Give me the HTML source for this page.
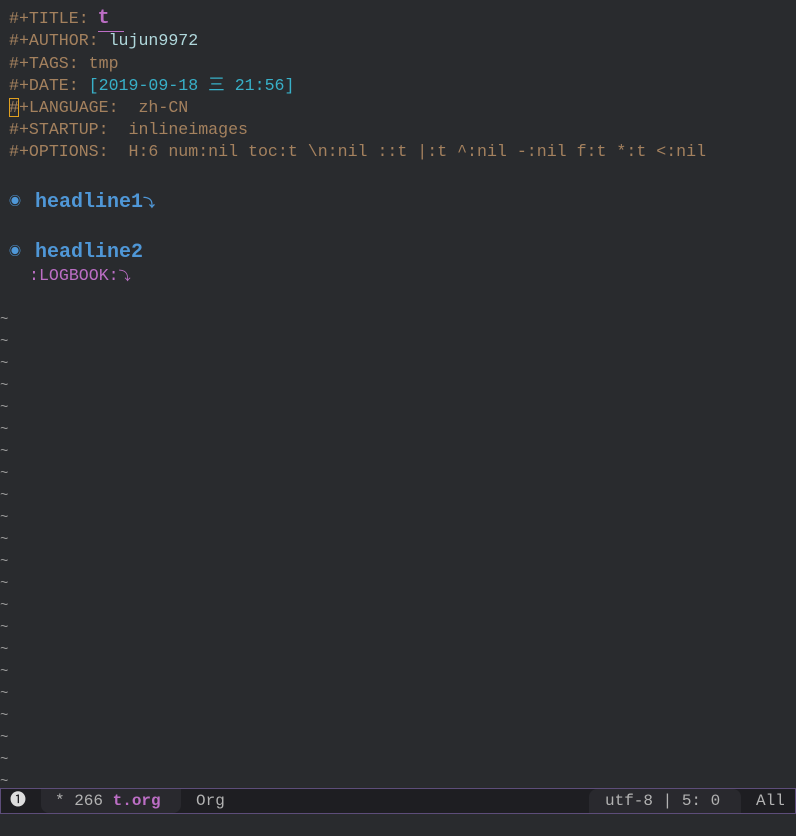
<!DOCTYPE html>
<html><head><meta charset="utf-8"><style>
html,body{margin:0;padding:0;}
body{width:796px;height:836px;background:#292b2e;overflow:hidden;position:relative;font-family:"Liberation Mono","Noto Sans CJK SC",monospace;font-size:16.6px;color:#a08060;}
.l{position:absolute;left:9px;height:22px;line-height:22px;white-space:pre;}
.k{color:#a4815e}
.v{color:#b0d8dc}
.d{color:#38b0c8}
.t{color:#bc6ec5;font-weight:bold;font-size:20px;display:inline-block;line-height:20px;border-bottom:1px solid #bc6ec5;padding:0 14px 2px 0;margin-left:-1px}
.h{position:absolute;left:9px;height:28px;line-height:28px;color:#4f97d7;font-weight:bold;font-size:20px;white-space:pre;}
.b{font-size:12px;display:inline-block;width:26px;vertical-align:2px;}
.ar{font-size:12px;}
.tl{position:absolute;left:0;color:#9a9a9a;font-size:14px;line-height:22px;height:22px;}
#ml{position:absolute;left:0;top:788px;width:794px;height:24px;border:1px solid #5d4d7a;background:#1e1e22;color:#b2b2b2;font-size:16px;line-height:24px;}
.seg{position:absolute;top:0;height:24px;white-space:pre;}
</style></head><body>
<div class="l" style="top:8px"><span class="k">#+TITLE: </span><span class="t">t</span></div>
<div class="l" style="top:30px"><span class="k">#+AUTHOR: </span><span class="v">lujun9972</span></div>
<div class="l" style="top:53px"><span class="k">#+TAGS: tmp</span></div>
<div class="l" style="top:75px"><span class="k">#+DATE: </span><span class="d">[2019-09-18 三 21:56]</span></div>
<div class="l" style="top:97px"><span class="k" style="outline:1px solid #e0a020;outline-offset:-1px">#</span><span class="k">+LANGUAGE:  zh-CN</span></div>
<div class="l" style="top:119px"><span class="k">#+STARTUP:  inlineimages</span></div>
<div class="l" style="top:141px"><span class="k">#+OPTIONS:  H:6 num:nil toc:t \n:nil ::t |:t ^:nil -:nil f:t *:t &lt;:nil</span></div>
<div class="h" style="top:188px"><span class="b">◉</span>headline1<span class="ar">⤵</span></div>
<div class="h" style="top:238px"><span class="b">◉</span>headline2</div>
<div class="l" style="top:265px;left:29px;color:#bc6ec5">:LOGBOOK:<span class="ar">⤵</span></div>
<div class="tl" style="top:309px">~</div><div class="tl" style="top:331px">~</div><div class="tl" style="top:353px">~</div><div class="tl" style="top:375px">~</div><div class="tl" style="top:397px">~</div><div class="tl" style="top:419px">~</div><div class="tl" style="top:441px">~</div><div class="tl" style="top:463px">~</div><div class="tl" style="top:485px">~</div><div class="tl" style="top:507px">~</div><div class="tl" style="top:529px">~</div><div class="tl" style="top:551px">~</div><div class="tl" style="top:573px">~</div><div class="tl" style="top:595px">~</div><div class="tl" style="top:617px">~</div><div class="tl" style="top:639px">~</div><div class="tl" style="top:661px">~</div><div class="tl" style="top:683px">~</div><div class="tl" style="top:705px">~</div><div class="tl" style="top:727px">~</div><div class="tl" style="top:749px">~</div><div class="tl" style="top:771px">~</div>
<div id="ml">
<div class="seg" style="left:9px;color:#ddd">➊</div>
<div class="seg" style="left:40px;width:140px;background:#29292e;border-radius:0 0 8px 8px"></div>
<div class="seg" style="left:54px">* 266 <b style="color:#bc6ec5">t.org</b></div>
<div class="seg" style="left:195px">Org</div>
<div class="seg" style="left:588px;width:152px;background:#29292e;border-radius:8px 8px 0 0"></div>
<div class="seg" style="left:604px">utf-8 | 5: 0</div>
<div class="seg" style="left:755px">All</div>
</div>
</body></html>
